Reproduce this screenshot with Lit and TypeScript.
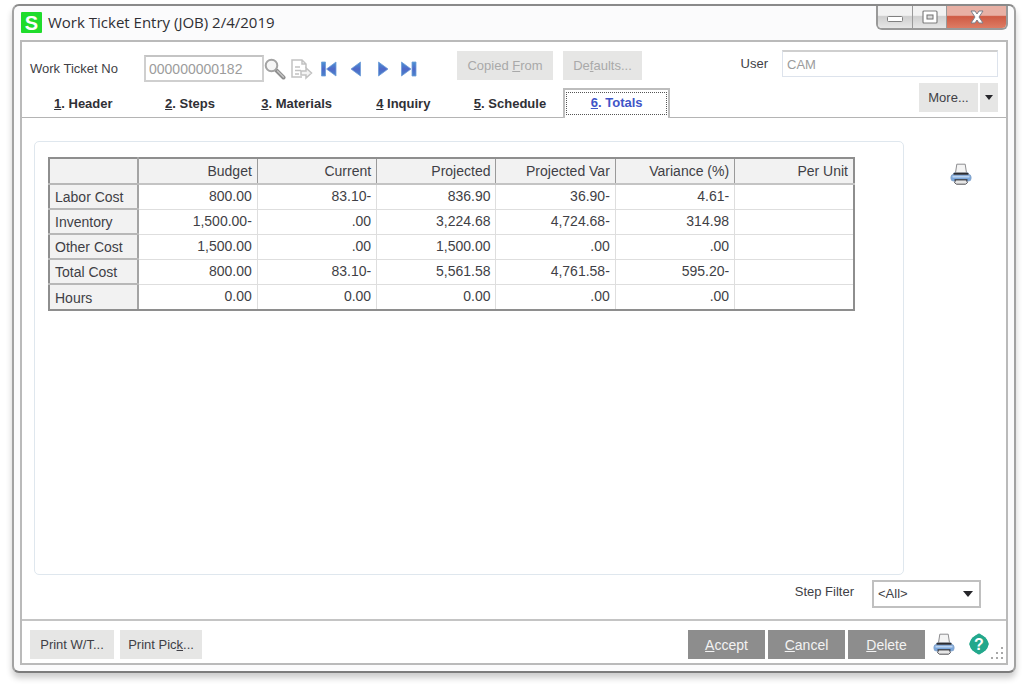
import { LitElement, html, css, svg } from "lit";
import { customElement, state } from "lit/decorators.js";

interface TabItem {
  key: string;
  rest: string;
}

interface CostRow {
  label: string;
  values: string[];
}

const TABS: TabItem[] = [
  { key: "1", rest: ". Header" },
  { key: "2", rest: ". Steps" },
  { key: "3", rest: ". Materials" },
  { key: "4", rest: " Inquiry" },
  { key: "5", rest: ". Schedule" },
  { key: "6", rest: ". Totals" },
];

const COLUMNS = ["Budget", "Current", "Projected", "Projected Var", "Variance (%)", "Per Unit"];

const ROWS: CostRow[] = [
  { label: "Labor Cost", values: ["800.00", "83.10-", "836.90", "36.90-", "4.61-", ""] },
  { label: "Inventory", values: ["1,500.00-", ".00", "3,224.68", "4,724.68-", "314.98", ""] },
  { label: "Other Cost", values: ["1,500.00", ".00", "1,500.00", ".00", ".00", ""] },
  { label: "Total Cost", values: ["800.00", "83.10-", "5,561.58", "4,761.58-", "595.20-", ""] },
  { label: "Hours", values: ["0.00", "0.00", "0.00", ".00", ".00", ""] },
];

const arrowFill = svg`
  <linearGradient id="blue" x1="0" y1="0" x2="0" y2="1">
    <stop offset="0" stop-color="#4a94d4" />
    <stop offset="0.5" stop-color="#4f68c8" />
    <stop offset="1" stop-color="#4a86cc" />
  </linearGradient>`;

const printer = html`
  <svg width="22" height="22" viewBox="0 0 22 22" aria-hidden="true">
    <rect x="1" y="11.5" width="20" height="6.500" rx="2.500" fill="#7ba7dc" stroke="#86a6cc" />
    <path d="M4.500 9h13l2.500 3.500H2z" fill="#97b4d6" />
    <path d="M6.800 1.200h8.400l1.300 8.600h-11z" fill="#f4f4f4" stroke="#8d8d90" />
    <path d="M3.500 10.800h15" stroke="#2c2c30" stroke-width="1.800" />
    <path d="M2.500 13.800h17" stroke="#c6daf2" stroke-width="1.400" />
    <path d="M4.500 17h13" stroke="#3d4450" stroke-width="1.800" />
    <path d="M5.800 17h10.400l1.300 2.600-2 1.600h-9l-2-1.600z" fill="#e6e6e6" stroke="#505055" />
  </svg>`;

@customElement("app-root")
export class AppRoot extends LitElement {
  @state() private active = 5;

  static styles = css`
    :host {
      display: flex;
      box-sizing: border-box;
      min-height: 100vh;
      padding: 4px 8px 16px 12px;
      background: #fff;
      color: #3f3f46;
      font: 13px/16px "Liberation Sans", Arial, sans-serif;
    }
    * {
      box-sizing: border-box;
    }
    button,
    input,
    select {
      margin: 0;
      padding: 0;
      border: 0;
      border-radius: 0;
      background: none;
      color: inherit;
      font: inherit;
    }
    svg {
      display: block;
    }
    .window {
      flex: 1;
      display: flex;
      flex-direction: column;
      min-width: 0;
      padding: 0 6px 6px;
      border: 2px solid #a2a2a2;
      border-top-color: #8a8a8a;
      border-bottom-color: #7c7c7c;
      border-radius: 7px;
      background: #fbfbfc;
      box-shadow: 0 5px 6px rgba(0, 0, 0, 0.2);
    }
    .titlebar {
      display: flex;
      align-items: flex-start;
      gap: 6px;
      height: 34px;
    }
    .logo {
      margin: 6px 0 0 1px;
    }
    .logo text {
      font: bold 20px "Liberation Sans", Arial, sans-serif;
    }
    .title {
      flex: 1;
      margin: 0;
      padding-top: 6px;
      color: #2f2f34;
      font: 15px/20px "Open Sans", "Noto Sans", sans-serif;
    }
    .controls {
      display: flex;
      height: 24px;
      border: 2px solid #999;
      border-top: 0;
      border-radius: 0 0 6px 6px;
      overflow: hidden;
    }
    .control {
      display: grid;
      place-items: center;
      width: 34px;
      background: linear-gradient(#f2f2f2 0 42%, #cfcfcf 48%, #e6e6e6);
    }
    .control + .control {
      border-left: 1px solid #9a9a9a;
    }
    .control.close {
      width: 60px;
      background: linear-gradient(#e8b0a4 0 42%, #cf5b44 48%, #dd7c64);
    }
    .client {
      flex: 1;
      display: flex;
      flex-direction: column;
      border: 2px solid #bababa;
      background: #fff;
    }
    .header {
      display: flex;
      justify-content: space-between;
      padding: 8px 8px 0 8px;
      border-bottom: 1px solid #b4b4b4;
    }
    .lead {
      flex: none;
      width: 640px;
      display: flex;
      flex-direction: column;
      justify-content: space-between;
    }
    .tools {
      display: flex;
      align-items: center;
      height: 37px;
    }
    .tools label {
      width: 114px;
    }
    .ticket {
      width: 120px;
      height: 27px;
      padding-left: 3px;
      border: 2px solid #cfcfcf;
      border-top-color: #c4c4c4;
      color: #9c9c9c;
      font-size: 14px;
    }
    .icons {
      display: flex;
      align-items: center;
      gap: 5px;
    }
    .nav {
      display: grid;
      place-items: center;
      width: 22px;
      height: 22px;
    }
    .flat {
      height: 29px;
      background: #e6e6e5;
    }
    .tools .flat {
      align-self: flex-start;
      margin: 1px 0 0 10px;
      color: #a9a9a9;
    }
    .tools .copied {
      width: 96px;
      margin-left: 36px;
    }
    .tools .defaults {
      width: 79px;
    }
    .tabs {
      display: grid;
      grid-template-columns: repeat(6, 1fr);
      height: 30px;
      margin-bottom: -1px;
    }
    .tab {
      padding: 1px 3px 0;
      font-weight: bold;
      color: #303036;
    }
    .tab.active {
      padding: 1px 1px 3px;
      border: 2px solid #bdbdbd;
      border-bottom: 0;
      background: #fff;
      color: #3f55c8;
    }
    .tab.active span {
      display: flex;
      align-items: center;
      justify-content: center;
      height: 23px;
      border: 1px dotted #555;
      white-space: pre;
    }
    .side {
      display: flex;
      flex-direction: column;
      align-items: flex-end;
      gap: 6px;
      padding-bottom: 5px;
    }
    .user {
      display: flex;
      align-items: center;
      gap: 14px;
    }
    .user input {
      width: 216px;
      height: 27px;
      padding: 0 4px;
      border: 1px solid #dde3ec;
      border-top: 2px solid #cfcfcf;
      color: #9c9c9c;
    }
    .more {
      display: flex;
      gap: 2px;
    }
    .more .flat {
      width: 59px;
    }
    .more .drop {
      display: grid;
      place-items: center;
      width: 18px;
    }
    .work {
      flex: 1;
      display: flex;
      justify-content: space-between;
      padding: 23px 34px 0 12px;
    }
    .panel {
      flex: 1;
      margin-right: 46px;
      padding: 15px 13px;
      border: 1px solid #dfe7ee;
      border-radius: 5px;
    }
    .side-print {
      height: 22px;
      margin-top: 22px;
    }
    .costs {
      width: 807px;
      max-width: 100%;
      table-layout: fixed;
      border: 2px solid #8e8e8e;
      border-collapse: collapse;
      font-size: 14px;
      line-height: 16px;
    }
    .costs th,
    .costs td {
      padding: 1px 5px 0;
      height: 25px;
      border: 1px solid #dedede;
      text-align: right;
      font-weight: normal;
    }
    .costs td {
      padding: 0 5px 2px;
    }
    .costs thead th {
      height: 26px;
      padding: 0 5px;
      border-right-color: #9a9a9a;
      border-bottom: 2px solid #c4c4c4;
      background: #f2f2f2;
    }
    .costs tbody th,
    .costs .corner {
      width: 89px;
      border-right: 2px solid #a4a4a4;
      border-bottom: 2px solid #b8b8b8;
      background: #f2f2f2;
      text-align: left;
    }
    .costs tbody tr:last-child > * {
      height: 26px;
      border-bottom: 2px solid #8e8e8e;
    }
    .filter {
      display: flex;
      justify-content: flex-end;
      gap: 18px;
      padding: 5px 25px 11px;
    }
    .filter label {
      padding-top: 4px;
    }
    .select {
      display: grid;
      grid-template-columns: 1fr 18px;
      align-items: center;
      width: 109px;
      height: 28px;
    }
    .select select {
      grid-area: 1 / 1 / 2 / 3;
      height: 28px;
      padding-left: 4px;
      border: 2px solid #c0c0c0;
      appearance: none;
    }
    .select svg {
      grid-area: 1 / 2;
      pointer-events: none;
    }
    .footer {
      display: flex;
      align-items: flex-start;
      gap: 6px;
      height: 44px;
      padding: 9px 2px 0 8px;
      border-top: 2px solid #c4c4c4;
    }
    .print-wt {
      width: 84px;
    }
    .print-pick {
      width: 82px;
    }
    .actions {
      display: flex;
      gap: 3px;
      margin-left: auto;
    }
    .action {
      width: 77px;
      height: 29px;
      background: #8d8d8d;
      color: #f2f2f2;
      font-size: 14px;
    }
    .footer .icon {
      margin: 3px 2px 0;
    }
    .footer .help {
      margin-left: 5px;
    }
    .help text {
      font: bold 16px "Liberation Sans", Arial, sans-serif;
    }
    .grip {
      align-self: flex-end;
      margin: 0 0 2px -8px;
    }
  `;

  private nav(label: string, shape: unknown) {
    return html`<button class="nav" aria-label=${label}>
      <svg width="18" height="16" viewBox="0 0 18 16"><defs>${arrowFill}</defs>
        <g fill="url(#blue)" stroke="#6f9cd8" stroke-width="0.8">${shape}</g></svg>
    </button>`;
  }

  render() {
    return html`
      <section class="window">
        <header class="titlebar">
          <svg class="logo" width="21" height="21" viewBox="0 0 21 21" role="img" aria-label="Sage">
            <rect width="21" height="21" rx="1" fill="#1fdc2c" />
            <text x="10.500" y="17.500" text-anchor="middle" fill="#fff">S</text>
          </svg>
          <h1 class="title">Work Ticket Entry (JOB) 2/4/2019</h1>
          <div class="controls">
            <button class="control" aria-label="Minimize">
              <svg width="18" height="16"><rect x="1.500" y="7.500" width="15" height="5" rx="1" fill="#fff" stroke="#808080" /></svg>
            </button>
            <button class="control" aria-label="Maximize">
              <svg width="16" height="14"><rect x="1" y="1" width="14" height="12" rx="1" fill="#fff" stroke="#808080" stroke-width="1.200" /><rect x="5" y="5" width="6" height="4" fill="#ddd" stroke="#707070" /></svg>
            </button>
            <button class="control close" aria-label="Close">
              <svg width="16" height="14" viewBox="0 0 16 14"><path d="M2 1h4l2 3 2-3h4l-4 6 4 6h-4l-2-3-2 3H2l4-6z" fill="#fff" stroke="#7b7f8a" stroke-linejoin="round" /></svg>
            </button>
          </div>
        </header>

        <main class="client">
          <div class="header">
            <div class="lead">
              <div class="tools">
                <label for="ticket">Work Ticket No</label>
                <input id="ticket" class="ticket" value="000000000182" />
                <div class="icons">
                  <button class="nav" aria-label="Look up">
                    <svg width="22" height="22" viewBox="0 0 22 22">
                      <path d="M12.500 12.500l7 7" stroke="#8d8d8d" stroke-width="4" stroke-linecap="round" />
                      <path d="M13.500 13l6 6" stroke="#c4c4c4" stroke-width="1.500" stroke-linecap="round" />
                      <circle cx="7.500" cy="7.500" r="5.800" fill="#f6f6f6" stroke="#a3a3a3" stroke-width="2" />
                    </svg>
                  </button>
                  <button class="nav" aria-label="Next ticket number">
                    <svg width="22" height="22" viewBox="0 0 22 22" fill="none" stroke="#c2c2c2" stroke-width="1.500">
                      <path d="M15 10V6l-4-4H1v17h10M11 2v4h4M4 9h5M4 12.500h6M4 16h4" />
                      <path d="M10 13h5v-3l5.500 5-5.500 5v-3h-5z" fill="#f4f4f4" />
                    </svg>
                  </button>
                  ${this.nav("First", svg`<path d="M1.500 1h4v14h-4zM16 1v14L6.500 8z" />`)}
                  ${this.nav("Previous", svg`<path d="M13.500 1v14L4 8z" />`)}
                  ${this.nav("Next", svg`<path d="M4.500 1v14L14 8z" />`)}
                  ${this.nav("Last", svg`<path d="M0.500 1v14L10 8zM11 1h4v14h-4z" />`)}
                </div>
                <button class="flat copied" disabled>Copied <u>F</u>rom</button>
                <button class="flat defaults" disabled>De<u>f</u>aults...</button>
              </div>
              <div class="tabs" role="tablist">
                ${TABS.map(
                  (tab, i) => html`<button
                    class="tab ${i === this.active ? "active" : ""}"
                    role="tab"
                    aria-selected=${i === this.active}
                    @click=${() => (this.active = i)}
                  ><span><u>${tab.key}</u>${tab.rest}</span></button>`
                )}
              </div>
            </div>
            <div class="side">
              <div class="user">
                <label for="user">User</label>
                <input id="user" value="CAM" />
              </div>
              <div class="more">
                <button class="flat">More...</button>
                <button class="flat drop" aria-label="More options">
                  <svg width="8" height="5"><path d="M0 0h8L4 5z" fill="#26262a" /></svg>
                </button>
              </div>
            </div>
          </div>

          <div class="work">
            <div class="panel" role="tabpanel">
              <table class="costs">
                <thead>
                  <tr>
                    <th class="corner"></th>
                    ${COLUMNS.map((name) => html`<th scope="col">${name}</th>`)}
                  </tr>
                </thead>
                <tbody>
                  ${ROWS.map(
                    (row) => html`<tr>
                      <th scope="row">${row.label}</th>
                      ${row.values.map((value) => html`<td>${value}</td>`)}
                    </tr>`
                  )}
                </tbody>
              </table>
            </div>
            <button class="side-print" aria-label="Print totals">${printer}</button>
          </div>

          <div class="filter">
            <label for="step">Step Filter</label>
            <div class="select">
              <select id="step"><option>&lt;All&gt;</option></select>
              <svg width="10" height="6" aria-hidden="true"><path d="M0 0h10L5 6z" fill="#26262a" /></svg>
            </div>
          </div>

          <footer class="footer">
            <button class="flat print-wt">Print W/T...</button>
            <button class="flat print-pick">Print Pic<u>k</u>...</button>
            <div class="actions">
              <button class="action"><u>A</u>ccept</button>
              <button class="action"><u>C</u>ancel</button>
              <button class="action"><u>D</u>elete</button>
            </div>
            <button class="icon" aria-label="Print">${printer}</button>
            <button class="icon help" aria-label="Help">
              <svg width="22" height="22" viewBox="0 0 22 22">
                <path d="M11 .5c2 0 9.800 7.500 9.800 10.500S13 21.500 11 21.500 1.200 14 1.200 11 9 .5 11 .5z" fill="#23a88c" />
                <circle cx="11" cy="11" r="9.200" fill="#23a88c" />
                <text x="11" y="16.500" text-anchor="middle" fill="#fff">?</text>
              </svg>
            </button>
            <svg class="grip" width="14" height="14" fill="#a8a8a8" aria-hidden="true">
              <path d="M11 0h2v2h-2zM11 5h2v2h-2zM11 10h2v2h-2zM6 5h2v2H6zM6 10h2v2H6zM1 10h2v2H1z" />
            </svg>
          </footer>
        </main>
      </section>
    `;
  }
}
